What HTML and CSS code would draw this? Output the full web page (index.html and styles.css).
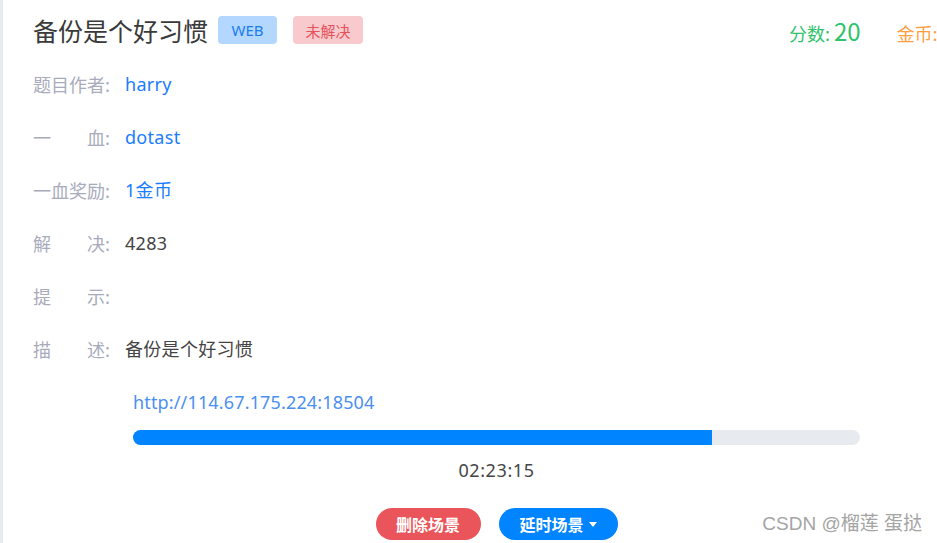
FILE: index.html
```html
<!DOCTYPE html>
<html lang="zh">
<head>
<meta charset="utf-8">
<link rel="stylesheet" href="styles.css">
</head>
<body>
<div class="page">
  <div class="header">
    <h1 class="title">备份是个好习惯</h1>
    <span class="badge badge-web">WEB</span>
    <span class="badge badge-unsolved">未解决</span>
    <div class="stats">
      <span class="score">分数: <b>20</b></span>
      <span class="coin">金币: <b>1</b></span>
    </div>
  </div>
  <div class="info">
    <div class="row"><span class="label"><span class="lt">题目作者</span>:</span><span class="val blue">harry</span></div>
    <div class="row"><span class="label"><span class="lt">一血</span>:</span><span class="val blue">dotast</span></div>
    <div class="row"><span class="label"><span class="lt">一血奖励</span>:</span><span class="val blue">1金币</span></div>
    <div class="row"><span class="label"><span class="lt">解决</span>:</span><span class="val">4283</span></div>
    <div class="row"><span class="label"><span class="lt">提示</span>:</span><span class="val"></span></div>
    <div class="row"><span class="label"><span class="lt">描述</span>:</span><span class="val">备份是个好习惯</span></div>
  </div>
  <div class="scene">
    <a class="url">http://114.67.175.224:18504</a>
    <div class="bar"><div class="fill" style="width: 79.6%"></div></div>
    <div class="time">02:23:15</div>
    <div class="actions">
      <button class="btn btn-red">删除场景</button>
      <button class="btn btn-blue">延时场景<span class="caret"></span></button>
    </div>
  </div>
</div>
<div class="watermark">CSDN @榴莲 蛋挞</div>
</body>
</html>
```
FILE: styles.css
```css
html, body {
  margin: 0;
  padding: 0;
  height: 100%;
  overflow: hidden;
  background: #fff;
}
body {
  font-family: "Noto Sans", "Noto Sans CJK SC", sans-serif;
  color: #3c3c3c;
  border-left: 3px solid #e9ecef;
  box-sizing: border-box;
  position: relative;
}
.page {
  width: 952px;
  padding: 12px 0 0 30px;
  box-sizing: border-box;
}
.header {
  display: flex;
  align-items: center;
  height: 36px;
}
.title {
  margin: 0 10px 0 0;
  font-size: 25px;
  font-weight: 400;
  line-height: 36px;
  color: #3a3a3a;
  font-family: "Noto Sans CJK SC", sans-serif;
}
.badge {
  display: inline-flex;
  align-items: center;
  justify-content: center;
  height: 28px;
  border-radius: 4px;
  font-size: 15px;
  box-sizing: border-box;
  flex: none;
}
.badge-web {
  width: 59px;
  background: #b3d7ff;
  color: #1a7cf0;
}
.badge-unsolved {
  width: 70px;
  margin-left: 16px;
  background: #f8cacd;
  color: #e5525b;
  font-family: "Noto Sans CJK SC", sans-serif;
}
.stats {
  margin-left: auto;
  display: flex;
  align-items: baseline;
  gap: 36px;
  flex: none;
  white-space: nowrap;
  font-family: "Noto Sans CJK SC", sans-serif;
}
.score {
  color: #2fc26c;
  font-size: 18px;
}
.score b, .coin b {
  font-weight: 400;
  font-size: 24px;
}
.coin {
  color: #ff9f43;
  font-size: 18px;
}
.info {
  margin-top: 24px;
  display: flex;
  flex-direction: column;
  gap: 28px;
}
.row {
  display: flex;
  align-items: center;
  font-size: 18px;
  line-height: 25px;
  height: 25px;
}
.label {
  display: flex;
  width: 92px;
  color: #a8abbc;
  font-family: "Noto Sans CJK SC", sans-serif;
}
.lt {
  width: 72px;
  text-align: justify;
  text-align-last: justify;
}
.val {
  color: #444;
  font-family: "Noto Sans", "Noto Sans CJK SC", sans-serif;
  letter-spacing: 0.3px;
}
.blue {
  color: #1a7cff;
}
.scene {
  margin-left: 100px;
  width: 727px;
  margin-top: 28px;
  display: flex;
  flex-direction: column;
}
.url {
  font-size: 18px;
  line-height: 25px;
  color: #4b8ff0;
  letter-spacing: 0.15px;
}
.bar {
  margin-top: 15px;
  height: 15px;
  border-radius: 8px;
  background: #e7eaee;
  overflow: hidden;
}
.fill {
  height: 100%;
  background: #0084ff;
}
.time {
  margin-top: 13px;
  text-align: center;
  font-size: 18px;
  line-height: 25px;
  color: #454545;
  letter-spacing: 0.6px;
}
.actions {
  margin-top: 25px;
  display: flex;
  justify-content: center;
  gap: 18px;
}
.btn {
  height: 32px;
  border: none;
  border-radius: 16px;
  color: #fff;
  font-size: 16px;
  font-weight: 700;
  font-family: "Noto Sans CJK SC", sans-serif;
  padding: 0;
  display: inline-flex;
  align-items: center;
  justify-content: center;
}
.btn-red {
  width: 105px;
  background: #e9555a;
}
.btn-blue {
  width: 119px;
  background: #0084ff;
}
.caret {
  display: inline-block;
  margin-left: 5px;
  width: 0;
  height: 0;
  border-left: 4px solid transparent;
  border-right: 4px solid transparent;
  border-top: 5px solid #fff;
}
.watermark {
  position: absolute;
  right: 15px;
  bottom: 8px;
  font-size: 19px;
  color: #a4a4a4;
  font-family: "Liberation Sans", "Noto Sans CJK SC", sans-serif;
}
```
